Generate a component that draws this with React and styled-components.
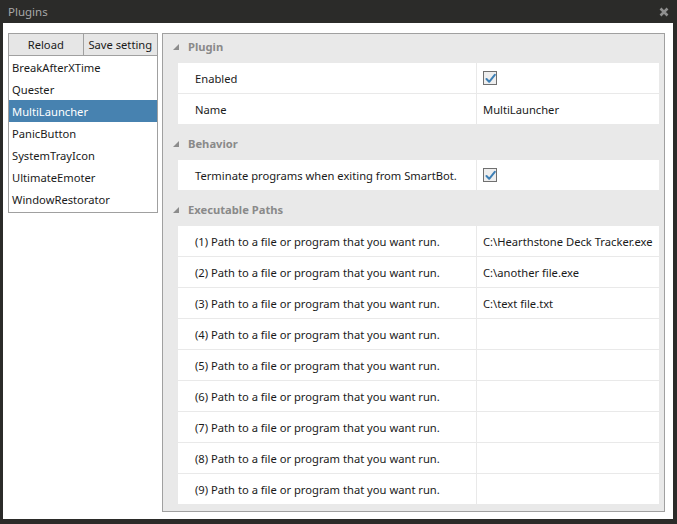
import React from 'react';
import styled, { createGlobalStyle } from 'styled-components';

const GlobalStyle = createGlobalStyle`
  html, body {
    margin: 0;
    padding: 0;
    background: #2b2b29;
  }
  * {
    box-sizing: border-box;
  }
`;

const plugins = ['BreakAfterXTime', 'Quester', 'MultiLauncher', 'PanicButton', 'SystemTrayIcon', 'UltimateEmoter', 'WindowRestorator'];

const paths = [
  'C:\\Hearthstone Deck Tracker.exe',
  'C:\\another file.exe',
  'C:\\text file.txt',
  '', '', '', '', '', '',
];

function Check() {
  return (
    <CheckBox>
      <svg width="11" height="11" viewBox="0 0 11 11">
        <path d="M1.5 6 L4.2 8.8 L9.8 1.8" fill="none" stroke="#3d7fb5" strokeWidth="2" strokeLinejoin="round" strokeLinecap="round" />
      </svg>
    </CheckBox>
  );
}

function Group({ title, children }) {
  return (
    <GroupBox>
      <Header>
        <svg width="6" height="6" viewBox="0 0 6 6">
          <polygon points="6,0 6,6 0,6" fill="#8c8c8c" />
        </svg>
        <span>{title}</span>
      </Header>
      <Rows>{children}</Rows>
    </GroupBox>
  );
}

function Row({ label, children }) {
  return (
    <RowLine>
      <Label>{label}</Label>
      <Value>{children}</Value>
    </RowLine>
  );
}

export default function App() {
  return (
    <>
      <GlobalStyle />
      <Window>
        <TitleBar>
          <span>Plugins</span>
          <svg width="10" height="10" viewBox="0 0 10 10">
            <path d="M1.5 1.5 L8.5 8.5 M8.5 1.5 L1.5 8.5" stroke="#8f8f8f" strokeWidth="2.6" />
          </svg>
        </TitleBar>
        <Client>
          <Side>
            <Buttons>
              <Button>Reload</Button>
              <Button>Save setting</Button>
            </Buttons>
            <List>
              {plugins.map((p) => (
                <Item key={p} $selected={p === 'MultiLauncher'}>{p}</Item>
              ))}
            </List>
          </Side>
          <Grid>
            <Group title="Plugin">
              <Row label="Enabled"><Check /></Row>
              <Row label="Name">MultiLauncher</Row>
            </Group>
            <Group title="Behavior">
              <Row label="Terminate programs when exiting from SmartBot."><Check /></Row>
            </Group>
            <Group title="Executable Paths">
              {paths.map((p, i) => (
                <Row key={i} label={`(${i + 1}) Path to a file or program that you want run.`}>{p}</Row>
              ))}
            </Group>
          </Grid>
        </Client>
      </Window>
    </>
  );
}

const Window = styled.div`
  width: 677px;
  height: 524px;
  background: #2b2b29;
  display: flex;
  flex-direction: column;
  font-family: "Noto Sans", "Open Sans", sans-serif;
  font-size: 11.2px;
`;

const TitleBar = styled.div`
  height: 23px;
  padding: 0 8px 0 8px;
  display: flex;
  align-items: center;
  justify-content: space-between;
  color: #a8a8a8;
  font-size: 11.5px;
`;

const Client = styled.div`
  flex: 1;
  margin: 0 4px 5px 3px;
  background: #ffffff;
  display: flex;
  gap: 4px;
  padding: 10px 8px 7px 5px;
`;

const Side = styled.div`
  width: 150px;
  flex-shrink: 0;
  display: flex;
  flex-direction: column;
  align-self: flex-start;
  border: 1px solid #a0a0a0;
`;

const Buttons = styled.div`
  display: flex;
  height: 22px;
  border-bottom: 1px solid #a0a0a0;
`;

const Button = styled.div`
  flex: 1;
  display: flex;
  align-items: center;
  justify-content: center;
  background: #e6e6e6;
  color: #1a1a1a;
  & + & {
    border-left: 1px solid #a0a0a0;
  }
`;

const List = styled.div`
  display: flex;
  flex-direction: column;
  padding-bottom: 2px;
`;

const Item = styled.div`
  height: 22px;
  padding: 0 3px;
  display: flex;
  align-items: center;
  color: ${({ $selected }) => ($selected ? '#ffffff' : '#1a1a1a')};
  background: ${({ $selected }) => ($selected ? '#4782b0' : 'transparent')};
`;

const Grid = styled.div`
  flex: 1;
  min-width: 0;
  background: #e9e9e9;
  border: 1px solid #a0a0a0;
  padding: 0 5px 0 15px;
  display: flex;
  flex-direction: column;
`;

const GroupBox = styled.div`
  display: flex;
  flex-direction: column;
  padding-bottom: 6px;
  & + & {
    padding-top: 1px;
  }
`;

const Header = styled.div`
  height: 29px;
  padding-bottom: 5px;
  display: flex;
  align-items: center;
  gap: 9px;
  margin-left: -5px;
  color: #8a8a8a;
  font-weight: bold;
  svg {
    margin-top: 1px;
  }
`;

const Rows = styled.div`
  display: flex;
  flex-direction: column;
  gap: 1px;
`;

const RowLine = styled.div`
  height: 30px;
  display: flex;
  background: #ffffff;
  color: #1a1a1a;
`;

const Label = styled.div`
  width: 299px;
  flex-shrink: 0;
  padding-left: 17px;
  display: flex;
  align-items: center;
  border-right: 1px solid #e9e9e9;
  white-space: nowrap;
`;

const Value = styled.div`
  flex: 1;
  min-width: 0;
  padding-left: 6px;
  display: flex;
  align-items: center;
  white-space: nowrap;
`;

const CheckBox = styled.span`
  width: 14px;
  height: 14px;
  border: 1px solid #707070;
  background: #eeeeee;
  display: flex;
  align-items: center;
  justify-content: center;
`;
